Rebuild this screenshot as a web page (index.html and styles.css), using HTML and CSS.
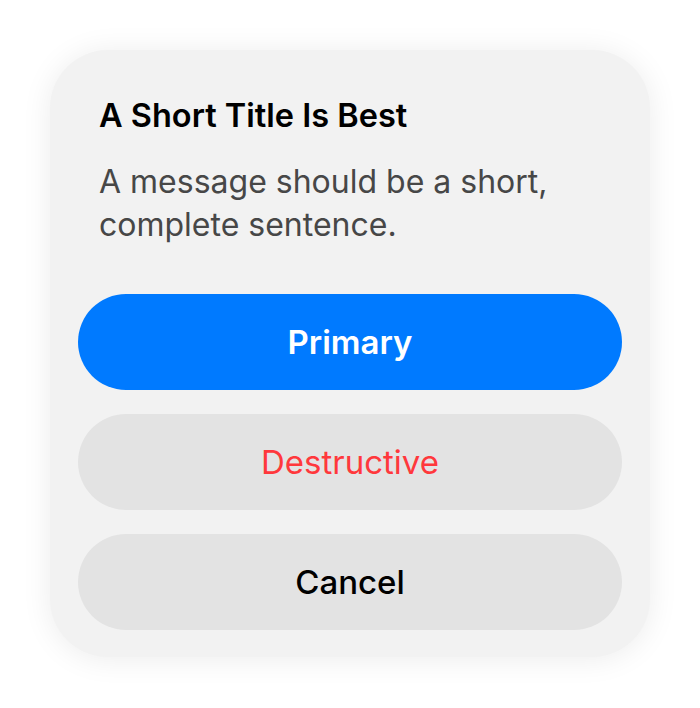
FILE: index.html
```html
<!DOCTYPE html>
<html lang="en">
<head>
    <meta charset="UTF-8">
    <meta name="viewport" content="width=device-width, initial-scale=1.0">
    <title>Alert</title>
    <link rel="stylesheet" href="styles.css">
</head>
<body>
    <div class="alert">
        <div class="alert-text">
            <h1 class="alert-title">A Short Title Is Best</h1>
            <p class="alert-message">A message should be a short, complete sentence.</p>
        </div>
        <div class="alert-actions">
            <button class="btn btn-primary">Primary</button>
            <button class="btn btn-destructive">Destructive</button>
            <button class="btn btn-cancel">Cancel</button>
        </div>
    </div>
</body>
</html>
```

FILE: styles.css
```css
body {
    margin: 0;
    background: #ffffff;
    font-family: Inter, "Noto Sans", sans-serif;
    -webkit-font-smoothing: antialiased;
}

.alert {
    width: 600px;
    height: 607px;
    margin: 50px;
    box-sizing: border-box;
    padding: 28px;
    background: #f2f2f2;
    border-radius: 58px;
    box-shadow: 0 2px 30px rgba(0, 0, 0, 0.08);
    display: flex;
    flex-direction: column;
}

.alert-text {
    padding: 0 21px;
    margin-bottom: 48px;
}

.alert-title {
    margin: 18px 0 24px;
    font-size: 32.5px;
    font-weight: 600;
    line-height: 40px;
    color: #000000;
}

.alert-message {
    margin: 0;
    font-size: 32px;
    line-height: 43px;
    color: #474747;
}

.alert-actions {
    display: flex;
    flex-direction: column;
    gap: 24px;
}

.btn {
    height: 96px;
    border: none;
    border-radius: 48px;
    font-family: inherit;
    font-size: 33px;
    background: #e3e3e3;
    cursor: pointer;
}

.btn-primary {
    background: #007aff;
    color: #ffffff;
    font-weight: 600;
}

.btn-destructive {
    color: #ff383c;
}

.btn-cancel {
    color: #000000;
    font-weight: 500;
}
```
